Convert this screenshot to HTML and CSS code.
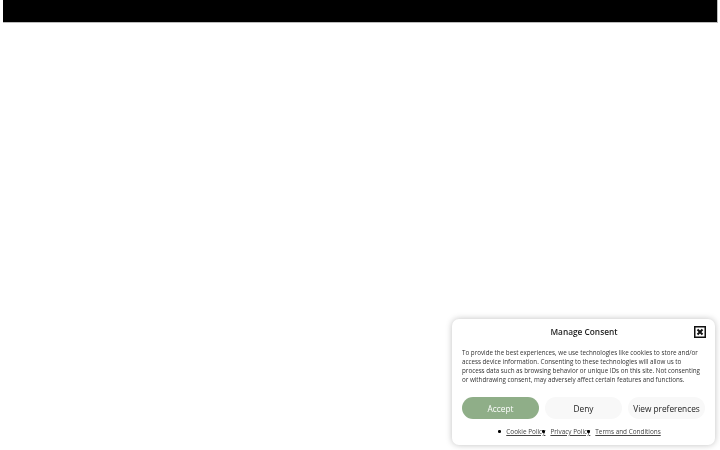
FILE: index.html
```html
<!DOCTYPE html>
<html>
<head>
<meta charset="utf-8">
<link rel="stylesheet" href="styles.css">
</head>
<body>
<div class="topbar"></div>
<div class="consent">
  <div class="head">
    <div class="title">Manage Consent</div>
    <div class="close">
      <svg viewBox="0 0 12 12" width="12" height="12"><rect x="0.75" y="0.75" width="10.5" height="10.5" fill="#fff" stroke="#111" stroke-width="1.5"/><path d="M3.5 3.5L8.5 8.5M8.5 3.5L3.5 8.5" stroke="#111" stroke-width="2"/></svg>
    </div>
  </div>
  <p class="msg">To provide the best experiences, we use technologies like cookies to store and/or access device information. Consenting to these technologies will allow us to process data such as browsing behavior or unique IDs on this site. Not consenting or withdrawing consent, may adversely affect certain features and functions.</p>
  <div class="buttons">
    <button class="btn accept">Accept</button>
    <button class="btn">Deny</button>
    <button class="btn">View preferences</button>
  </div>
  <ul class="links">
    <li><a>Cookie Policy</a></li>
    <li><a>Privacy Policy</a></li>
    <li class="last"><a>Terms and Conditions</a></li>
  </ul>
</div>
</body>
</html>
```
FILE: styles.css
```css
html, body { margin: 0; padding: 0; background: #fff; }
body { font-family: "Open Sans", "DejaVu Sans", sans-serif; width: 720px; height: 450px; overflow: hidden; }
.topbar {
  margin-left: 3px;
  width: 714px;
  height: 22px;
  background: #000;
  border-right: 1px solid #bbb;
  border-bottom: 1px solid #bbb;
}
.consent {
  position: fixed;
  right: 5px;
  bottom: 5px;
  width: 263px;
  height: 126px;
  box-sizing: border-box;
  background: #fff;
  border-radius: 7px;
  box-shadow: 0 0 6px rgba(0,0,0,0.25);
  padding: 6px 10px 0 10px;
  display: flex;
  flex-direction: column;
}
.head {
  display: grid;
  grid-template-columns: 1fr auto;
  align-items: center;
  height: 13px;
}
.title {
  text-align: center;
  font-size: 8.3px;
  font-weight: 600;
  color: #222;
  padding-left: 12px;
}
.close { width: 12px; height: 12px; margin-right: -1px; }
.close svg { display: block; }
.msg {
  margin: 10px 0 0 0;
  font-size: 6.25px;
  line-height: 9px;
  color: #333;
}
.buttons {
  margin-top: 13px;
  display: grid;
  grid-template-columns: repeat(3, 77px);
  justify-content: space-between;
}
.btn {
  height: 22px;
  border: none;
  border-radius: 11px;
  background: #f8f8f8;
  font-family: inherit;
  font-size: 8.3px;
  color: #222;
  padding: 0;
}
.btn.accept { background: #8fae88; color: #fff; }
.links {
  margin: 8px 0 0 0;
  padding: 0;
  list-style: none;
  display: flex;
  justify-content: center;
  gap: 5px;
  font-size: 6.4px;
  color: #444;
}
.links li { position: relative; }
.links li::before {
  content: "";
  position: absolute;
  width: 2.5px; height: 2.5px;
  border-radius: 50%;
  background: #000;
  left: -8px; top: 3px;
}
.links a { text-decoration: underline; }
```
